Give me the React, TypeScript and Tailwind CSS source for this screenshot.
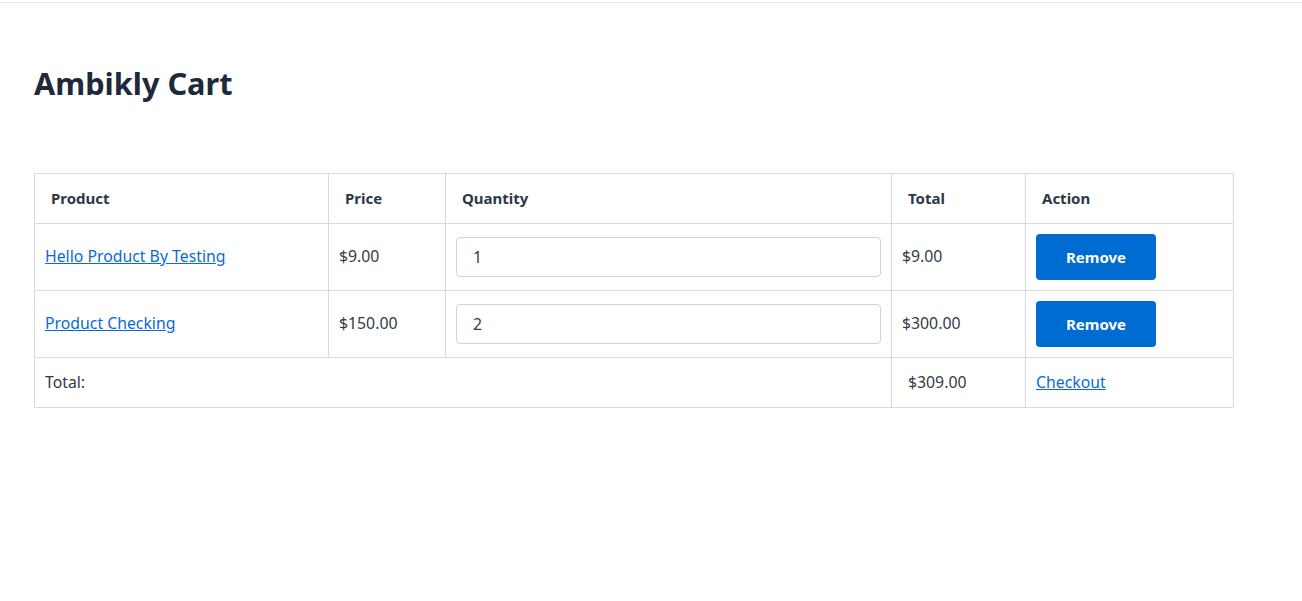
import React from "react";

const rows = [
  { name: "Hello Product By Testing", price: "$9.00", qty: "1", total: "$9.00" },
  { name: "Product Checking", price: "$150.00", qty: "2", total: "$300.00" },
];

export default function App() {
  return (
    <div className="min-h-[601px] bg-white text-[#333b45]" style={{ fontFamily: '"Noto Sans", "Open Sans", sans-serif' }}>
      <div className="h-[3px] border-b border-[#e8e8ea]" />
      <div className="pl-[34px] pt-[60px]">
        <h1 className="text-[30.7px] font-bold leading-[40px] text-[#1e293b]">Ambikly Cart</h1>
        <table className="mt-[70px] w-[1200px] table-fixed border-collapse border border-[#d9d9df] text-[15.8px]">
          <colgroup>
            <col className="w-[294px]" />
            <col className="w-[117px]" />
            <col className="w-[446px]" />
            <col className="w-[134px]" />
            <col className="w-[208px]" />
          </colgroup>
          <thead>
            <tr className="h-[50px]">
              {["Product", "Price", "Quantity", "Total", "Action"].map((h) => (
                <th key={h} className="border border-[#d9d9df] px-[16px] text-left text-[15px] font-bold text-[#2d3846]">
                  {h}
                </th>
              ))}
            </tr>
          </thead>
          <tbody>
            {rows.map((r) => (
              <tr key={r.name} className="h-[67px]">
                <td className="border border-[#d9d9df] px-[10px]">
                  <a href="#" className="text-[#0a6ad6] underline">{r.name}</a>
                </td>
                <td className="border border-[#d9d9df] px-[10px]">{r.price}</td>
                <td className="border border-[#d9d9df] px-[10px]">
                  <input
                    readOnly
                    value={r.qty}
                    className="h-[40px] w-full rounded-[4px] border border-[#cfd3da] px-[16px] text-[15.8px] text-[#333b45] outline-none"
                  />
                </td>
                <td className="border border-[#d9d9df] px-[10px]">{r.total}</td>
                <td className="border border-[#d9d9df] px-[10px]">
                  <button className="h-[46px] w-[120px] rounded-[4px] bg-[#006bd1] text-[15px] font-bold text-white">
                    Remove
                  </button>
                </td>
              </tr>
            ))}
            <tr className="h-[50px]">
              <td colSpan={3} className="border border-[#d9d9df] px-[10px]">Total:</td>
              <td className="border border-[#d9d9df] px-[10px] pl-[16px]">$309.00</td>
              <td className="border border-[#d9d9df] px-[10px]">
                <a href="#" className="text-[#0a6ad6] underline">Checkout</a>
              </td>
            </tr>
          </tbody>
        </table>
      </div>
    </div>
  );
}
